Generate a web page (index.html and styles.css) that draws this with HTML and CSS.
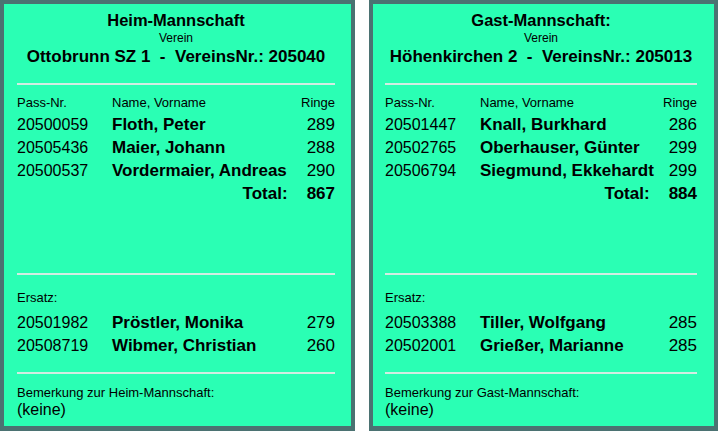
FILE: index.html
```html
<!DOCTYPE html>
<html lang="de">
<head>
<meta charset="utf-8">
<title>Mannschaften</title>
<link rel="stylesheet" href="styles.css">
</head>
<body>
<div class="page">
  <section class="panel panel-home">
    <div class="head">
      <div class="title">Heim-Mannschaft</div>
      <div class="sub">Verein</div>
      <div class="club">Ottobrunn SZ 1&nbsp; -&nbsp; VereinsNr.: 205040</div>
    </div>
    <hr class="sep sep-top">
    <div class="row row-head"><span class="pass">Pass-Nr.</span><span class="name">Name, Vorname</span><span class="score">Ringe</span></div>
    <div class="row"><span class="pass">20500059</span><span class="name b">Floth, Peter</span><span class="score">289</span></div>
    <div class="row"><span class="pass">20505436</span><span class="name b">Maier, Johann</span><span class="score">288</span></div>
    <div class="row"><span class="pass">20500537</span><span class="name b">Vordermaier, Andreas</span><span class="score">290</span></div>
    <div class="row total"><span class="total-label">Total:</span><span class="score">867</span></div>
    <div class="spacer"></div>
    <hr class="sep sep-mid">
    <div class="label label-ersatz">Ersatz:</div>
    <div class="row"><span class="pass">20501982</span><span class="name b">Pröstler, Monika</span><span class="score">279</span></div>
    <div class="row"><span class="pass">20508719</span><span class="name b">Wibmer, Christian</span><span class="score">260</span></div>
    <hr class="sep sep-bottom">
    <div class="label label-note">Bemerkung zur Heim-Mannschaft:</div>
    <div class="note">(keine)</div>
  </section>
  <section class="panel panel-guest">
    <div class="head">
      <div class="title">Gast-Mannschaft:</div>
      <div class="sub">Verein</div>
      <div class="club">Höhenkirchen 2&nbsp; -&nbsp; VereinsNr.: 205013</div>
    </div>
    <hr class="sep sep-top">
    <div class="row row-head"><span class="pass">Pass-Nr.</span><span class="name">Name, Vorname</span><span class="score">Ringe</span></div>
    <div class="row"><span class="pass">20501447</span><span class="name b">Knall, Burkhard</span><span class="score">286</span></div>
    <div class="row"><span class="pass">20502765</span><span class="name b">Oberhauser, Günter</span><span class="score">299</span></div>
    <div class="row"><span class="pass">20506794</span><span class="name b">Siegmund, Ekkehardt</span><span class="score">299</span></div>
    <div class="row total"><span class="total-label">Total:</span><span class="score">884</span></div>
    <div class="spacer"></div>
    <hr class="sep sep-mid">
    <div class="label label-ersatz">Ersatz:</div>
    <div class="row"><span class="pass">20503388</span><span class="name b">Tiller, Wolfgang</span><span class="score">285</span></div>
    <div class="row"><span class="pass">20502001</span><span class="name b">Grießer, Marianne</span><span class="score">285</span></div>
    <hr class="sep sep-bottom">
    <div class="label label-note">Bemerkung zur Gast-Mannschaft:</div>
    <div class="note">(keine)</div>
  </section>
</div>
</body>
</html>
```

FILE: styles.css
```css
html, body {
  margin: 0;
  padding: 0;
  background: #ffffff;
}

body {
  font-family: "Liberation Sans", Arial, sans-serif;
  color: #000;
  width: 718px;
  height: 431px;
  overflow: hidden;
}

.page {
  display: flex;
  gap: 14px;
  height: 431px;
}

.panel {
  box-sizing: border-box;
  height: 431px;
  background: #2affb4;
  border: 4px solid #4b7272;
  border-bottom-width: 5px;
  display: flex;
  flex-direction: column;
  padding: 7px 16px 0 13px;
}

.panel-home {
  width: 355px;
}

.panel-guest {
  width: 349px;
  padding-left: 12px;
  padding-right: 17px;
}

.head {
  text-align: center;
}

.title {
  font-weight: bold;
  font-size: 16.5px;
  line-height: 19px;
}

.sub {
  font-size: 12px;
  line-height: 16px;
}

.club {
  font-weight: bold;
  font-size: 17px;
  line-height: 22px;
  white-space: nowrap;
}

.sep {
  border: 0;
  height: 2px;
  background: #d2ece2;
  margin: 0;
  width: 100%;
  flex: none;
}

.sep-top {
  margin-top: 15px;
  margin-bottom: 8px;
}

.row {
  display: flex;
  align-items: baseline;
  font-size: 16px;
  line-height: 23px;
  height: 23px;
  flex: none;
}

.row-head {
  font-size: 13px;
  line-height: 20px;
  height: 20px;
}

.pass {
  width: 95px;
  flex: none;
}

.name {
  flex: 1;
  white-space: nowrap;
  font-size: 17px;
}

.row-head .name {
  font-size: 13px;
}

.b {
  font-weight: bold;
}

.score {
  margin-left: auto;
  text-align: right;
  font-size: 17px;
}

.row-head .score {
  font-size: 13px;
}

.total {
  font-weight: bold;
}

.total-label {
  margin-left: auto;
  margin-right: 19px;
  font-size: 17px;
}

.total .score {
  margin-left: 0;
}

.spacer {
  flex: 1;
}

.label {
  font-size: 13px;
  line-height: 16px;
  flex: none;
}

.sep-mid {
  margin-bottom: 15px;
}

.label-ersatz {
  margin-bottom: 5px;
}

.sep-bottom {
  margin-top: 15px;
}

.label-note {
  margin-top: 11px;
}

.note {
  font-size: 16px;
  line-height: 18px;
  margin-bottom: 7px;
  flex: none;
}
```
